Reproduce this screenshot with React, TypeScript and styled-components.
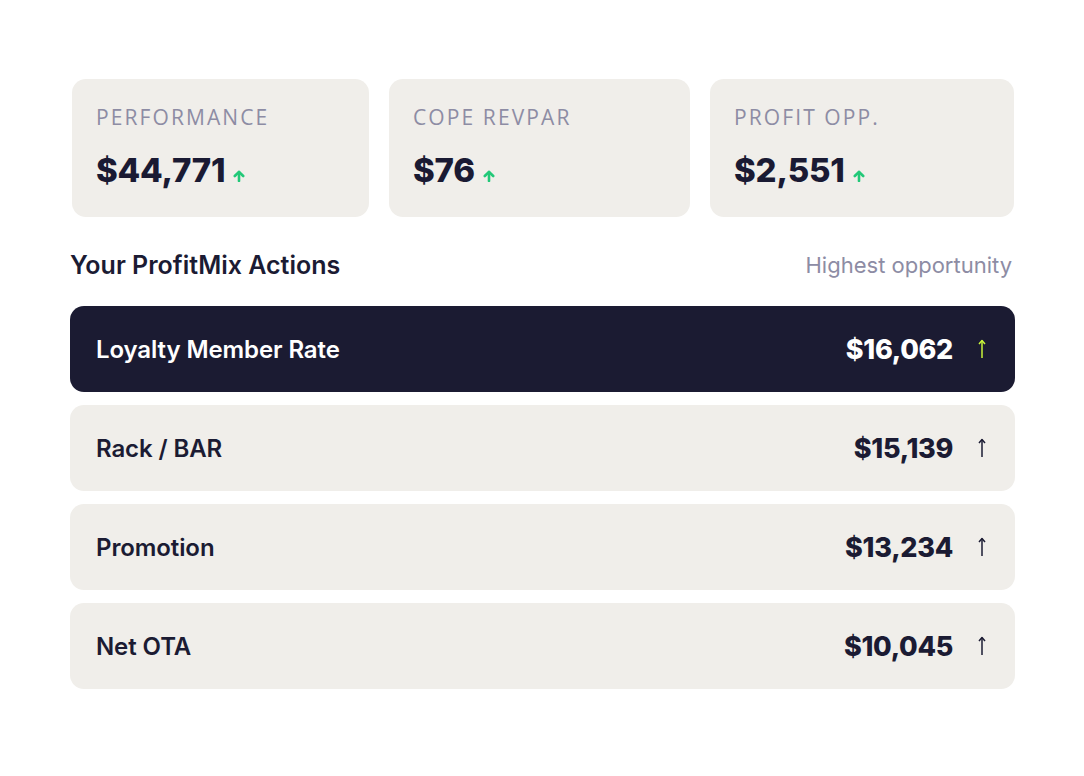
import React from "react";
import styled, { createGlobalStyle } from "styled-components";

const GlobalStyle = createGlobalStyle`
  html, body {
    margin: 0;
    padding: 0;
    background: #ffffff;
  }
  body {
    font-family: Inter, "Noto Sans", sans-serif;
    color: #1b1b33;
  }
`;

const Page = styled.div`
  width: 1084px;
  height: 776px;
  box-sizing: border-box;
  padding: 79px 69px 0 70px;
`;

const Stats = styled.div`
  display: grid;
  grid-template-columns: 297px 301px 304px;
  gap: 20px;
  margin-left: 2px;
`;

const StatCard = styled.div`
  height: 138px;
  box-sizing: border-box;
  background: #f0eeea;
  border-radius: 14px;
  padding: 25px 24px 0;
`;

const StatLabel = styled.div`
  font-family: "Open Sans", Inter, sans-serif;
  font-size: 21px;
  line-height: 26px;
  letter-spacing: 2.1px;
  color: #8d8ca4;
  font-weight: 500;
`;

const StatValueRow = styled.div`
  display: flex;
  align-items: baseline;
  gap: 8px;
  margin-top: 20px;
`;

const StatValue = styled.span`
  font-family: Inter, sans-serif;
  font-size: 33px;
  line-height: 40px;
  font-weight: 800;
  letter-spacing: -0.2px;
  color: #1a1a33;
`;

const Header = styled.div`
  display: flex;
  justify-content: space-between;
  align-items: center;
  margin-top: 31px;
  height: 34px;
`;

const Title = styled.h2`
  margin: 0;
  font-family: Inter, sans-serif;
  font-size: 25px;
  font-weight: 600;
  color: #1b1b33;
`;

const SortLabel = styled.span`
  font-family: Inter, sans-serif;
  font-size: 22px;
  color: #8d8ca4;
  margin-right: 3px;
`;

const Rows = styled.div`
  display: flex;
  flex-direction: column;
  gap: 13px;
  margin-top: 24px;
`;

const Row = styled.div<{ $active?: boolean }>`
  height: 86px;
  box-sizing: border-box;
  display: flex;
  align-items: center;
  padding: 0 29px 0 26px;
  border-radius: 14px;
  background: ${(p) => (p.$active ? "#1b1b32" : "#f0eeea")};
  color: ${(p) => (p.$active ? "#ffffff" : "#1b1b33")};
`;

const RowName = styled.span`
  flex: 1;
  font-family: Inter, sans-serif;
  font-size: 24px;
  font-weight: 600;
  letter-spacing: -0.1px;
`;

const RowValue = styled.span`
  font-family: Inter, sans-serif;
  font-size: 27px;
  font-weight: 800;
  letter-spacing: -0.3px;
  margin-right: 25px;
`;

const TrendUp = ({ color }: { color: string }) => (
  <svg width="12" height="12" viewBox="0 0 12 12" fill="none">
    <path d="M6 11V2" stroke={color} strokeWidth="2.6" strokeLinecap="round" />
    <path
      d="M1.8 6L6 1.8L10.2 6"
      stroke={color}
      strokeWidth="2.6"
      strokeLinecap="round"
      strokeLinejoin="round"
    />
  </svg>
);

const ThinUp = ({ color }: { color: string }) => (
  <svg width="8" height="20" viewBox="0 0 8 20" fill="none">
    <path d="M4 19V1.5" stroke={color} strokeWidth="1.5" />
    <path d="M1 5L4 1.5L7 5" stroke={color} strokeWidth="1.5" strokeLinejoin="round" />
  </svg>
);

const stats = [
  { label: "PERFORMANCE", value: "$44,771" },
  { label: "COPE REVPAR", value: "$76" },
  { label: "PROFIT OPP.", value: "$2,551" },
];

const actions = [
  { name: "Loyalty Member Rate", value: "$16,062", active: true },
  { name: "Rack / BAR", value: "$15,139" },
  { name: "Promotion", value: "$13,234" },
  { name: "Net OTA", value: "$10,045" },
];

export default function App() {
  return (
    <>
      <GlobalStyle />
      <Page>
        <Stats>
          {stats.map((s) => (
            <StatCard key={s.label}>
              <StatLabel>{s.label}</StatLabel>
              <StatValueRow>
                <StatValue>{s.value}</StatValue>
                <TrendUp color="#22c878" />
              </StatValueRow>
            </StatCard>
          ))}
        </Stats>

        <Header>
          <Title>Your ProfitMix Actions</Title>
          <SortLabel>Highest opportunity</SortLabel>
        </Header>

        <Rows>
          {actions.map((a) => (
            <Row key={a.name} $active={a.active}>
              <RowName>{a.name}</RowName>
              <RowValue>{a.value}</RowValue>
              <ThinUp color={a.active ? "#c8f53a" : "#1b1b33"} />
            </Row>
          ))}
        </Rows>
      </Page>
    </>
  );
}
